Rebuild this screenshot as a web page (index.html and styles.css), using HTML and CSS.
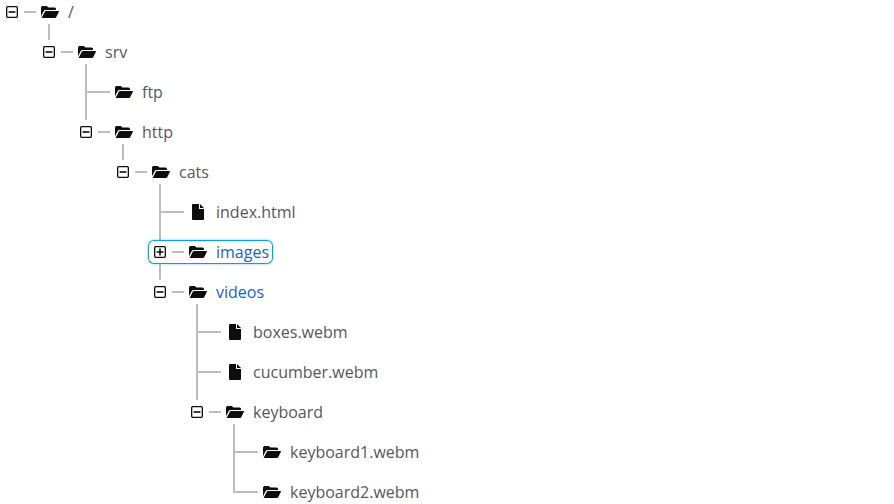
FILE: index.html
```html
<!DOCTYPE html>
<html lang="en">
<head>
<meta charset="utf-8">
<title>File tree</title>
<link rel="stylesheet" href="styles.css">
</head>
<body>
<svg class="defs" aria-hidden="true">
  <symbol id="folder" viewBox="0 0 18 12"><path d="M0 11V1.5Q0 0 1.5 0H5.7L7.5 1.6H13.5Q15 1.6 15 3.1V4.1H4.6Q3.3 4.1 2.7 5.1L0 10.2Z"/><path d="M.7 11.7L3.8 5.7Q4.2 5 5 5H17.4Q18.3 5 17.9 5.8L15.2 11.2Q14.8 12 14 12H1Q.7 12 .7 11.7Z"/></symbol>
  <symbol id="file" viewBox="0 0 12 16"><path d="M1 0H7V5H12V15Q12 16 11 16H1Q0 16 0 15V1Q0 0 1 0ZM8 0L12 4H8Z"/></symbol>
  <symbol id="minus" viewBox="0 0 12 12"><rect class="frame" x=".65" y=".65" width="10.7" height="10.7" rx="1"/><path d="M2.6 5.2H9.4V6.8H2.6Z"/></symbol>
  <symbol id="plus" viewBox="0 0 12 12"><rect class="frame" x=".65" y=".65" width="10.7" height="10.7" rx="1"/><path d="M2.6 5.2H9.4V6.8H2.6ZM5.2 2.6H6.8V9.4H5.2Z"/></symbol>
</svg>
<ul class="tree">
  <li><div class="row"><svg class="toggle"><use href="#minus"/></svg><i class="dash"></i><svg class="folder"><use href="#folder"/></svg><span>/</span></div>
    <ul>
      <li><div class="row"><svg class="toggle"><use href="#minus"/></svg><i class="dash"></i><svg class="folder"><use href="#folder"/></svg><span>srv</span></div>
        <ul>
          <li class="leaf"><div class="row"><i class="branch"></i><svg class="folder"><use href="#folder"/></svg><span>ftp</span></div></li>
          <li><div class="row"><svg class="toggle"><use href="#minus"/></svg><i class="dash"></i><svg class="folder"><use href="#folder"/></svg><span>http</span></div>
            <ul>
              <li><div class="row"><svg class="toggle"><use href="#minus"/></svg><i class="dash"></i><svg class="folder"><use href="#folder"/></svg><span>cats</span></div>
                <ul>
                  <li class="leaf"><div class="row"><i class="branch"></i><svg class="file"><use href="#file"/></svg><span>index.html</span></div></li>
                  <li><div class="row selected link"><svg class="toggle"><use href="#plus"/></svg><i class="dash"></i><svg class="folder"><use href="#folder"/></svg><span>images</span></div></li>
                  <li><div class="row link"><svg class="toggle"><use href="#minus"/></svg><i class="dash"></i><svg class="folder"><use href="#folder"/></svg><span>videos</span></div>
                    <ul>
                      <li class="leaf"><div class="row"><i class="branch"></i><svg class="file"><use href="#file"/></svg><span>boxes.webm</span></div></li>
                      <li class="leaf"><div class="row"><i class="branch"></i><svg class="file"><use href="#file"/></svg><span>cucumber.webm</span></div></li>
                      <li><div class="row"><svg class="toggle"><use href="#minus"/></svg><i class="dash"></i><svg class="folder"><use href="#folder"/></svg><span>keyboard</span></div>
                        <ul>
                          <li class="leaf"><div class="row"><i class="branch"></i><svg class="folder"><use href="#folder"/></svg><span>keyboard1.webm</span></div></li>
                          <li class="leaf"><div class="row"><i class="branch"></i><svg class="folder"><use href="#folder"/></svg><span>keyboard2.webm</span></div></li>
                        </ul>
                      </li>
                    </ul>
                  </li>
                </ul>
              </li>
            </ul>
          </li>
        </ul>
      </li>
    </ul>
  </li>
</ul>
</body>
</html>
```
FILE: styles.css
```css
* { box-sizing: border-box; }

body {
  margin: 0;
  height: 504px;
  overflow: hidden;
  background: #fff;
  color: #575757;
  font: 16px/24px "Open Sans", "Noto Sans", sans-serif;
}

.defs { position: absolute; width: 0; height: 0; }

ul { margin: 0; padding: 0; list-style: none; }
ul ul { padding-left: 37px; }
li { position: relative; }
ul ul > li { padding-top: 16px; }

/* Trunk line joining siblings to their parent */
ul ul > li::before {
  content: "";
  position: absolute;
  top: 0;
  left: 11px;
  width: 2px;
  height: 100%;
  background: #bdbdbd;
}
ul ul > li:last-child::before { height: 16px; }
ul ul > li.leaf:last-child::before { height: 29px; }

.row {
  position: relative;
  display: flex;
  align-items: center;
  width: max-content;
  height: 24px;
  padding-right: 4px;
  border-radius: 6px;
  white-space: nowrap;
}

.row svg { flex: none; fill: #0d0d0d; }
.toggle { width: 12px; height: 12px; margin: 0 6px; }
.frame { fill: none; stroke: #0d0d0d; stroke-width: 1.3; }
.dash { width: 12px; height: 2px; background: #bdbdbd; }
.branch { width: 24px; height: 2px; margin-left: 12px; background: #bdbdbd; }
.folder { width: 18px; height: 12px; margin: 0 9px 0 5px; }
.file { width: 12px; height: 16px; margin: 0 12px 0 8px; }

.link { color: #1a60cc; }
.selected {
  background: #fff;
  box-shadow: inset 0 0 0 1px #009fe8, 0 0 3px rgba(0, 159, 232, .5);
}
```
